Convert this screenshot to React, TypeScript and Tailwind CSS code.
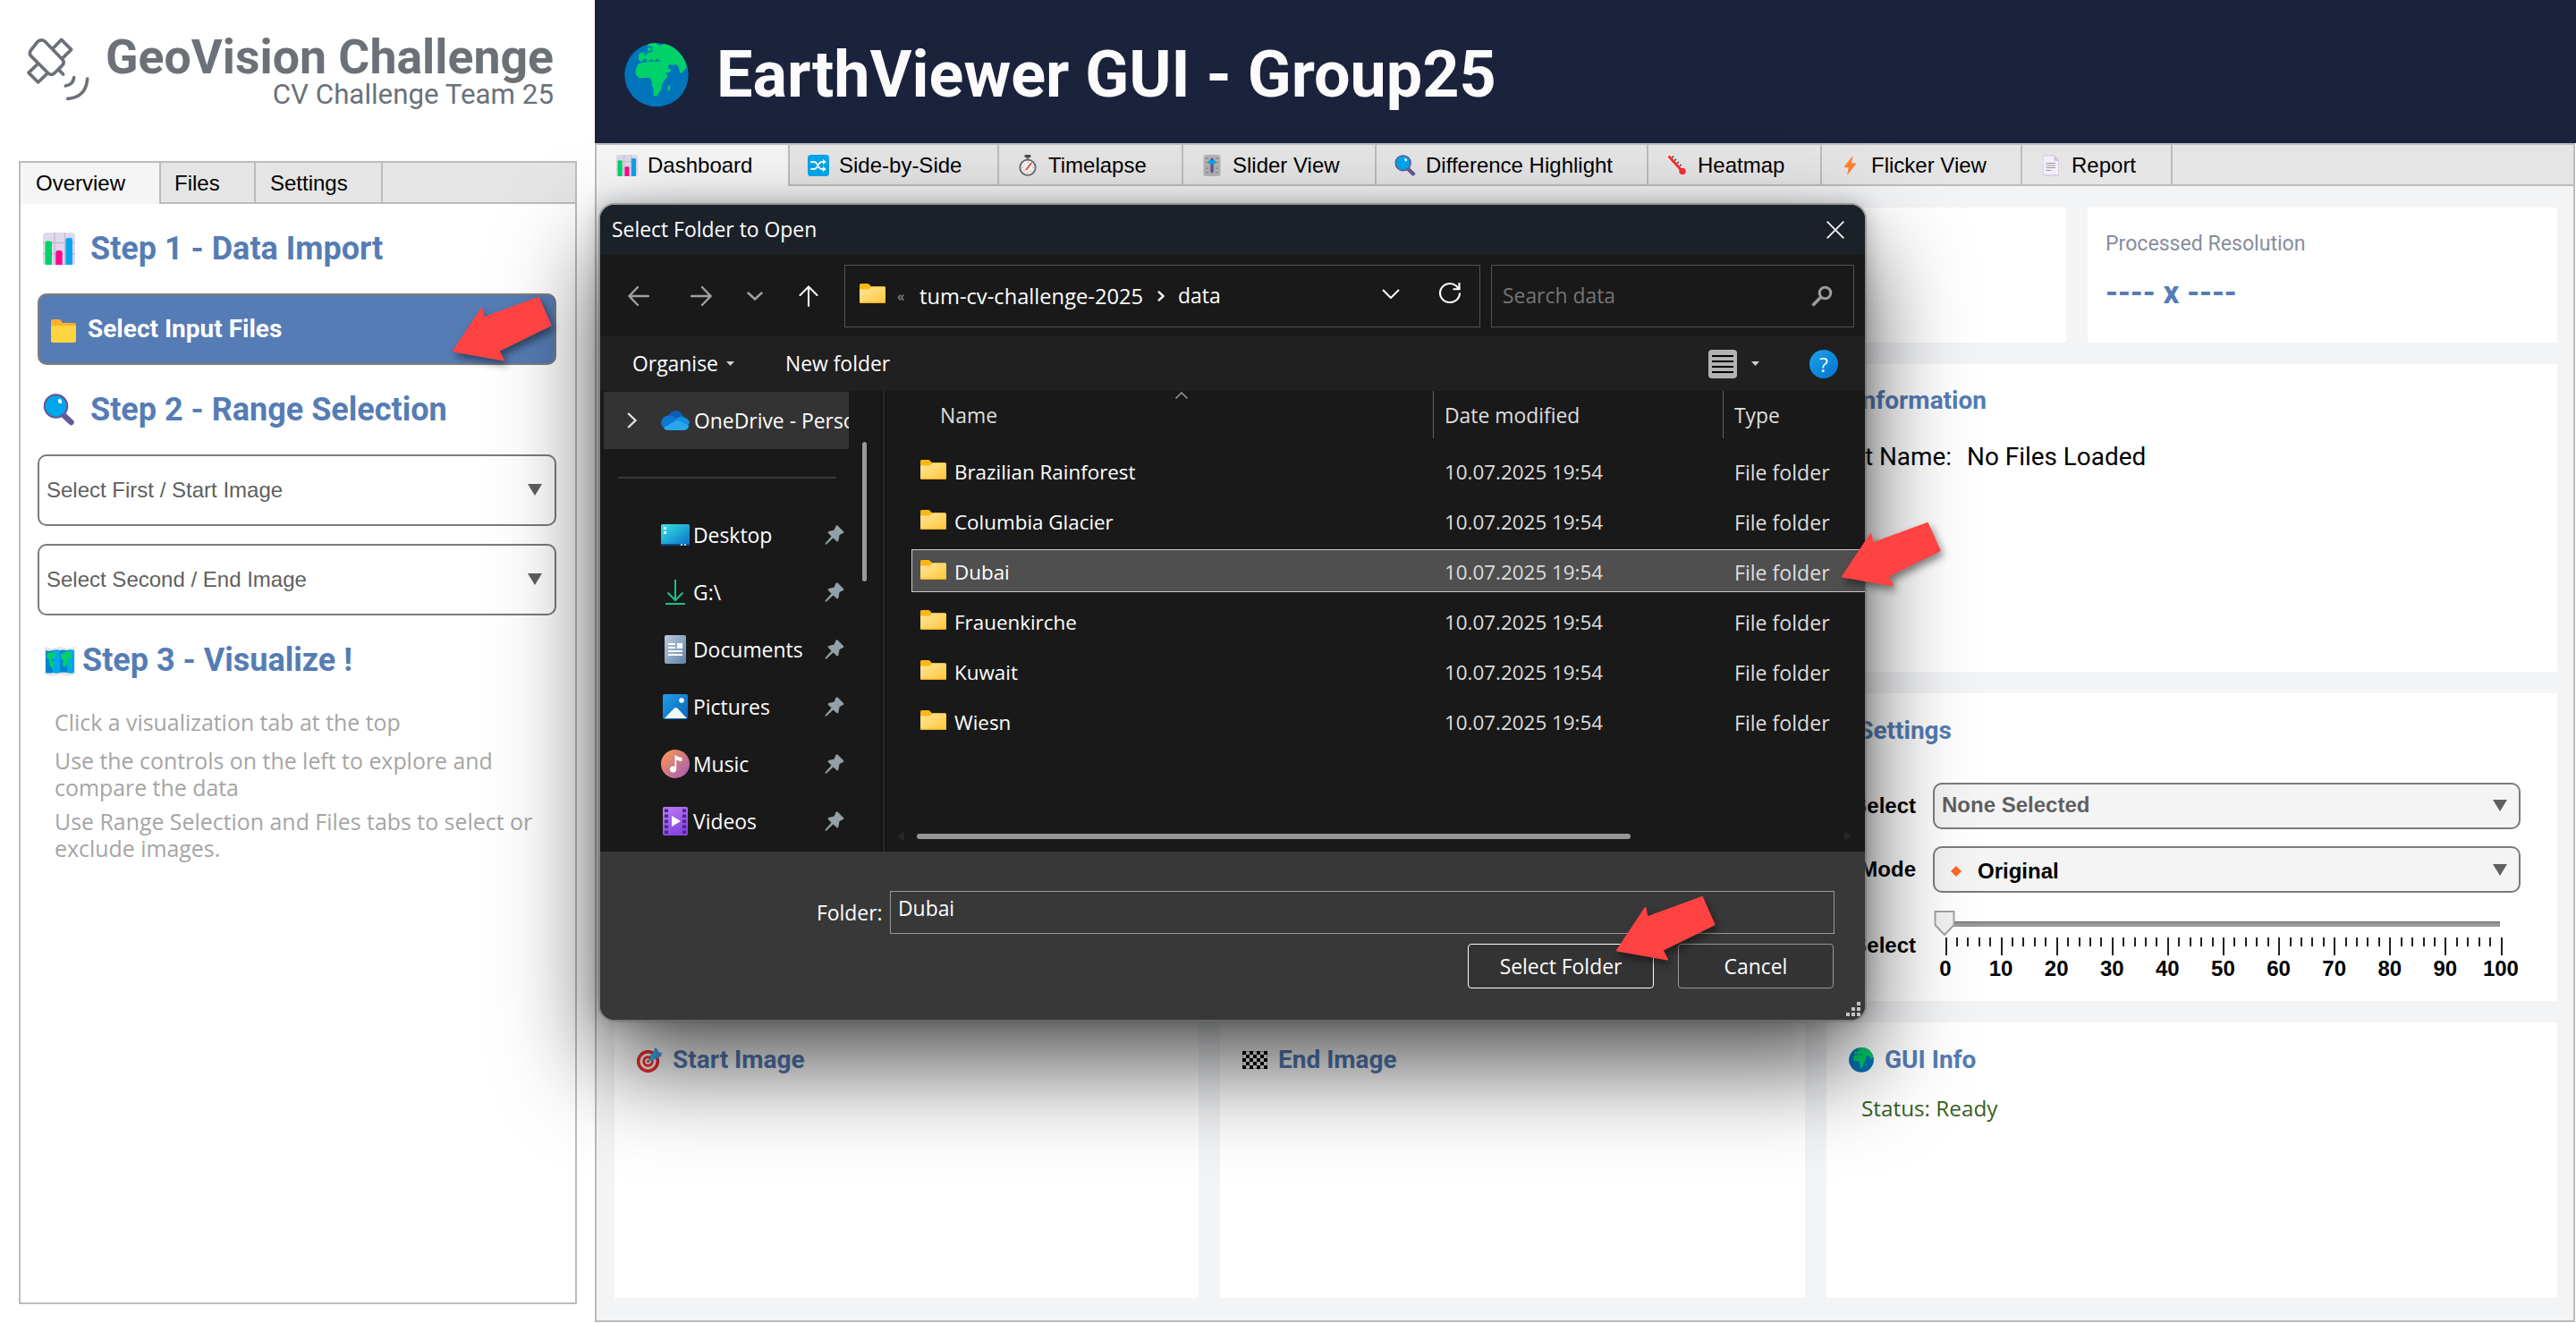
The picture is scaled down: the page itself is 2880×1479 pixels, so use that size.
import type { ReactNode } from 'react';

type IconProps = { className?: string };

const Chart = ({ className }: IconProps) => (
  <svg viewBox="0 0 36 36" className={className} preserveAspectRatio="none">
    <rect width="36" height="36" rx="3.5" fill="#e0d8ea" />
    <path d="M13 0v36M24.5 0v36M0 11.5h36M0 24h36" stroke="#c3b8d1" strokeWidth="1.3" />
    <path d="M2.5 36V11.5q0-2 2-2h3.500q2 0 2 2V36z" fill="#00d26a" />
    <path d="M14.300 36V22q0-2 2-2h3.400q2 0 2 2v14z" fill="#f70a8d" />
    <path d="M25.500 36V8q0-2 2-2h3.500q2 0 2 2v28z" fill="#00a6ed" />
  </svg>
);

const Globe = ({ className }: IconProps) => (
  <svg viewBox="24 22 216 216" className={className}>
    <circle cx="132" cy="129" r="107" fill="#0074ba" />
    <path
      fill="#00d26a"
      d="M104 26q14-4 26-4l6 6 12 2 8-6q40 8 60 40 14 20 18 38l-16 20q-6 4-8-4l-4-16-8-8-14 2-8-2-6 8 2 6q12 0 8 8-8 8-18 8-12-2-16-14l-4-4q6-8-2-12H120l-12-2-12-8H78l-6-6V64q2-10 12-10h12q6-4 8-8l-4-6z"
    />
    <path fill="#00d26a" d="M72 92q10-6 34-4l8 4 30 2 8 8 6 20 8 6q6 4 2 8-12 12-18 26l-2 16-14 20q-8 6-12-2v-22l-6-10v-14q-4-12-12-12l-20 2q-16 0-22-14-2-20 10-34z" />
    <path d="M84 80l12-6 6 10 14-8 8 8 10-10 12 10H84z" fill="#0074ba" />
    <path d="M102 40q2-8 14-4v14l-12 2-12 8 6 2" fill="none" stroke="#0074ba" strokeWidth="5" />
    <path d="M171 164q6-2 6 6 0 14-5 13-5-6-1-19z" fill="#00d26a" />
  </svg>
);

const Loupe = ({ className }: IconProps) => (
  <svg viewBox="0 0 36 36" className={className}>
    <path d="M23 24l8.500 8" stroke="#635994" strokeWidth="6.500" strokeLinecap="round" />
    <path d="M20 20l5 5.500" stroke="#635994" strokeWidth="3" />
    <circle cx="14.500" cy="14" r="12.700" fill="#00a6ed" stroke="#635994" strokeWidth="2.200" />
    <ellipse cx="19" cy="8.500" rx="2" ry="2.600" fill="#fff" transform="rotate(-20 19 8.500)" />
  </svg>
);

const EmojiFolder = ({ className }: IconProps) => (
  <svg viewBox="0 0 28 26" className={className}>
    <path d="M0 2q0-2 2-2h7q1.500 0 2.500 1.500L13 4h13q2 0 2 2v10H0z" fill="#ffb02e" />
    <path d="M0 24V9q0-2 2-2h24q2 0 2 2v15q0 2-2 2H2q-2 0-2-2z" fill="#fcd53f" />
  </svg>
);

const WorldMap = ({ className }: IconProps) => (
  <svg viewBox="0 0 34 34" className={className}>
    <path d="M0 1l8 2 9-2 9 2 8-2v31l-8 2-9-2-9 2-8-2z" fill="#e6e6e6" />
    <path d="M1 5q4 1.500 8 0v25q-4 1-8 0zM17 5q4-1 8 0v25q-4-1-8 0z" fill="#0084ce" />
    <path d="M9 5q4-1.500 8 0v25q-4 1.500-8 0zM25 5q4-1.500 8 0v25q-4 1.500-8 0z" fill="#00a6ed" />
    <path d="M3 8l6-1 4 3-3 4-3 1 4 5-2 6-3-4-1-6-3-4zM18 9l6-3 6 2v6l-3 1-2-1 1 4-3 6-3-3 1-4-3-3zM28 20l2 1v3l-3-1z" fill="#00d26a" />
  </svg>
);

const Shuffle = ({ className }: IconProps) => (
  <svg viewBox="0 0 24 24" className={className}>
    <rect width="24" height="24" rx="3.500" fill="#00a6ed" />
    <path d="M4 8h3.500q1.500 0 3 2.500l2 3.500q1.500 2 3 2H18M4 16h3.500q1.500 0 3-2.200M12.500 10.300q1.500-2.300 3-2.300H18" fill="none" stroke="#fff" strokeWidth="1.900" strokeLinecap="round" />
    <path d="M17 4.800L20.800 8 17 11.200zM17 12.800l3.800 3.200-3.800 3.200z" fill="#fff" />
  </svg>
);

const Stopwatch = ({ className }: IconProps) => (
  <svg viewBox="0 0 24 24" className={className}>
    <rect x="8.500" y="0" width="7" height="3" rx="1" fill="#4a4a4a" />
    <path d="M12 3v3" stroke="#777" strokeWidth="3" />
    <circle cx="12" cy="14.300" r="8.700" fill="#f4f4f4" stroke="#636363" strokeWidth="1.700" />
    <path d="M12 7.500v1.500M12 19.500V21M5.500 14.300H7M17 14.300h1.500M7.500 9.800l1 1M7.500 18.800l1-1M16.500 18.800l-1-1" stroke="#aaa" />
    <path d="M10.500 16.500L15.800 9.500" stroke="#f8312f" strokeWidth="1.600" strokeLinecap="round" />
  </svg>
);

const SliderIcon = ({ className }: IconProps) => (
  <svg viewBox="0 0 24 24" className={className}>
    <rect x="2.500" width="19" height="24" rx="2.500" fill="#b4b4b4" />
    <path d="M5 4h3M5 8.500h3M5 15h3M5 20h3M16 4h3M16 8.500h3M16 15h3M16 20h3" stroke="#7d7d7d" strokeWidth="1.200" />
    <rect x="10.300" y="3.500" width="3.400" height="17" rx="1.700" fill="#635994" />
    <rect x="8" y="6" width="8" height="4.500" rx="2" fill="#00a6ed" />
  </svg>
);

const Thermometer = ({ className }: IconProps) => (
  <svg viewBox="0 0 24 24" className={className}>
    <path d="M3.500 2.500L17.500 18" stroke="#f4f4f4" strokeWidth="5" strokeLinecap="round" />
    <circle cx="18" cy="18.500" r="4.800" fill="#f4f4f4" />
    <path d="M3.500 2.500L17 17.500" stroke="#f8312f" strokeWidth="3.200" strokeLinecap="round" />
    <circle cx="18" cy="18.500" r="3.800" fill="#f8312f" />
    <path d="M8 1.500l-1.500 1.800M11 4.800L9.500 6.500M13.800 7.800l-1.500 1.700M16.500 11L15 12.600" stroke="#222" strokeWidth="1.200" />
  </svg>
);

const Bolt = ({ className }: IconProps) => (
  <svg viewBox="0 0 24 24" className={className}>
    <path d="M14.500 1L4.800 13.200q-.4.800.5.900l4.500.3L8 23l10-12.500q.5-.9-.5-1L13 9.300z" fill="#ff822d" />
  </svg>
);

const Page = ({ className }: IconProps) => (
  <svg viewBox="0 0 24 24" className={className}>
    <path d="M3 1.500Q3 0 4.500 0H16l5 6v16.500q0 1.500-1.500 1.500h-15Q3 24 3 22.500z" fill="#d9d0e5" />
    <path d="M4 1.500h11.500V7H20v15H4z" fill="#f3eef8" />
    <path d="M15.500 1v5.500H20.500z" fill="#cdc4d6" />
    <path d="M6.500 9.500H17M6.500 12H17M6.500 14.500H17M6.500 17.500h6" stroke="#9b9b9b" strokeWidth="1" />
  </svg>
);

const Dart = ({ className }: IconProps) => (
  <svg viewBox="0 0 28 28" className={className}>
    <circle cx="12.500" cy="15.500" r="12.500" fill="#ca0b4a" />
    <circle cx="12.500" cy="15.500" r="12" fill="#f8312f" />
    <circle cx="12.500" cy="15.500" r="9" fill="#fff" />
    <circle cx="12.500" cy="15.500" r="6.300" fill="#f8312f" />
    <circle cx="12.500" cy="15.500" r="3.300" fill="#fff" />
    <circle cx="12.500" cy="15.500" r="1.500" fill="#f8312f" />
    <path d="M12.500 15.500l6-6" stroke="#1d8fa8" strokeWidth="1.600" />
    <path d="M15 9l4-4 1-5 3 2 1 3 4 1-1 4-5 2-5 3z" fill="#46a4fb" />
    <path d="M14.500 13.500l6-9 2 2-6 8z" fill="#26c9fc" />
  </svg>
);

const Checkered = ({ className }: IconProps) => (
  <svg viewBox="0 0 28 20" className={className}>
    {[0, 1, 2, 3, 4].map((r) =>
      [0, 1, 2, 3, 4, 5, 6].map((c) =>
        (r + c) % 2 === 0 ? <rect key={`${r}-${c}`} x={c * 4} y={r * 4} width="4" height="4" fill="#000" /> : null,
      ),
    )}
    <path d="M0 0h28v20H0z" fill="none" stroke="#000" strokeWidth=".6" />
  </svg>
);

const Satellite = ({ className }: IconProps) => (
  <svg viewBox="0 0 300 270" className={className} fill="none" stroke="#6c7178" strokeWidth="11" strokeLinecap="round" strokeLinejoin="round">
    <path d="M66 50q13-11 26 0l58 60q8 11-2 20l-26 26q-10 8-20 0L44 98q-8-9 0-20z" />
    <path d="M116 74l30-31 33 33-31 31" />
    <path d="M68 123l-32 31 32 32 32-31" />
    <path d="M138 145l14 14" />
    <path d="M188 170q-2 24-28 28M233 174q-4 62-66 67" />
  </svg>
);

const WinFolder = ({ className }: IconProps) => (
  <svg viewBox="0 0 29 22" className={className}>
    <defs>
      <linearGradient id="wf" x1="0" y1="0" x2="1" y2="1">
        <stop offset="0" stopColor="#ffe69b" />
        <stop offset="1" stopColor="#ffc73a" />
      </linearGradient>
    </defs>
    <path d="M0 1.500Q0 0 1.500 0H9q1 0 1.800.9L13 3.200h14.500Q29 3.200 29 4.700V12H0z" fill="#fdb714" />
    <path d="M0 6.500h9.500q1 0 1.700-.8l1.400-1.500q.7-.7 1.700-.7h13.200Q29 3.500 29 5v15.500q0 1.500-1.500 1.500h-26Q0 22 0 20.500z" fill="url(#wf)" />
    <path d="M.5 21.300h28" stroke="#e9a91f" />
  </svg>
);

const Cloud = ({ className }: IconProps) => (
  <svg viewBox="0 0 32 22" className={className}>
    <path d="M8 6q3-6 9-6 6 .5 8 7l-9 6z" fill="#0a5fb8" />
    <path d="M0 14Q1 6 8 5.500q6 0 9 4L6 20Q0 19 0 14z" fill="#0d78d4" />
    <path d="M17 9q5-4 10-1 5 2 5 6l-4 5-14-7z" fill="#1590df" />
    <path d="M3 19l13-7.500q2-1 4 0l11.300 5.500q-1 4.500-5.300 5H8q-4 0-5-3z" fill="#28a8ea" />
  </svg>
);

const Pin = ({ className }: IconProps) => (
  <svg viewBox="0 0 22 22" className={className}>
    <path d="M12.500 1q1-1.300 2.200-.3l6.200 6.200q1 1.200-.3 2.200l-4 2-1.300 6.400q-.7 1.700-2 .6L9.500 14.500 2 21.500l-1.500.3.300-1.600 6.700-7.700L4 9q-1-1.300.6-2l6-1.500z" fill="#93a0a8" />
  </svg>
);

const places: { label: string; icon: ReactNode }[] = [
  {
    label: 'Desktop',
    icon: (
      <svg viewBox="0 0 32 24" className="h-6 w-8">
        <defs>
          <linearGradient id="dk" x1="0" y1="0" x2="1" y2="1">
            <stop offset="0" stopColor="#35e3e3" />
            <stop offset="1" stopColor="#0a6fc9" />
          </linearGradient>
        </defs>
        <rect width="32" height="24" rx="1.500" fill="url(#dk)" />
        <rect y="22" width="32" height="2" fill="#0d4a86" />
        <path d="M3 3h3v3H3zM3 8h3v3H3z" fill="#fff" />
        <path d="M22 22h2v2h-2zM26 22h2v2h-2z" fill="#b9d9ee" />
      </svg>
    ),
  },
  {
    label: 'G:\\',
    icon: (
      <svg viewBox="0 0 24 28" className="h-7 w-6" fill="none" stroke="#22bd8c" strokeWidth="2">
        <path d="M12 0v23M3.500 14.500L12 23l8.500-8.500M1 27h22" />
      </svg>
    ),
  },
  {
    label: 'Documents',
    icon: (
      <svg viewBox="0 0 24 32" className="h-8 w-6">
        <defs>
          <linearGradient id="dc" x1="0" y1="0" x2="1" y2="1">
            <stop offset="0" stopColor="#bccbdc" />
            <stop offset="1" stopColor="#5f83a8" />
          </linearGradient>
        </defs>
        <rect width="24" height="32" rx="2" fill="url(#dc)" />
        <path d="M4 9h8v2H4zM4 13h8v2H4zM14 9h6v6h-6zM4 17h16v2H4zM4 21h16v2H4z" fill="#fff" />
      </svg>
    ),
  },
  {
    label: 'Pictures',
    icon: (
      <svg viewBox="0 0 28 28" className="size-7">
        <defs>
          <linearGradient id="pc" x1="0" y1="0" x2="1" y2="1">
            <stop offset="0" stopColor="#1f9fe8" />
            <stop offset="1" stopColor="#0a62ba" />
          </linearGradient>
        </defs>
        <rect width="28" height="28" rx="2" fill="url(#pc)" />
        <circle cx="21" cy="7" r="2.800" fill="#fff" />
        <path d="M2 27l11-11.500q1.500-1.200 3 0L27 27z" fill="#f1f7fd" />
      </svg>
    ),
  },
  {
    label: 'Music',
    icon: (
      <svg viewBox="0 0 32 32" className="size-8">
        <defs>
          <linearGradient id="ms" x1="0" y1="0" x2="1" y2="1">
            <stop offset=".15" stopColor="#f3905c" />
            <stop offset=".9" stopColor="#a960b0" />
          </linearGradient>
        </defs>
        <circle cx="16" cy="16" r="16" fill="url(#ms)" />
        <circle cx="13.500" cy="22" r="3.500" fill="#fff" />
        <path d="M15.500 22V6q5 3 8 3v4q-4 0-6.300-1.800V22z" fill="#fff" />
      </svg>
    ),
  },
  {
    label: 'Videos',
    icon: (
      <svg viewBox="0 0 28 32" className="h-8 w-7">
        <defs>
          <linearGradient id="vd" x1="0" y1="0" x2=".4" y2="1">
            <stop offset="0" stopColor="#bb7df6" />
            <stop offset="1" stopColor="#8a45e6" />
          </linearGradient>
        </defs>
        <rect width="28" height="32" rx="2" fill="url(#vd)" />
        <path d="M2 2.500h4v3.500H2zM2 8.500h4V12H2zM2 14.500h4V18H2zM2 20.500h4V24H2zM2 26.500h4V30H2zM22 2.500h4v3.500h-4zM22 8.500h4V12h-4zM22 14.500h4V18h-4zM22 20.500h4V24h-4zM22 26.500h4V30h-4z" fill="#492882" />
        <path d="M10 10l10 6-10 6z" fill="#fff" />
      </svg>
    ),
  },
];

const folders = ['Brazilian Rainforest', 'Columbia Glacier', 'Dubai', 'Frauenkirche', 'Kuwait', 'Wiesn'];

const mainTabs: { label: string; width: string; Icon: (p: IconProps) => ReactNode }[] = [
  { label: 'Dashboard', width: 'w-[216px]', Icon: Chart },
  { label: 'Side-by-Side', width: 'w-[234px]', Icon: Shuffle },
  { label: 'Timelapse', width: 'w-[206px]', Icon: Stopwatch },
  { label: 'Slider View', width: 'w-[216px]', Icon: SliderIcon },
  { label: 'Difference Highlight', width: 'w-[304px]', Icon: Loupe },
  { label: 'Heatmap', width: 'w-[194px]', Icon: Thermometer },
  { label: 'Flicker View', width: 'w-[224px]', Icon: Bolt },
  { label: 'Report', width: 'w-[168px]', Icon: Page },
];

const Triangle = () => (
  <svg viewBox="0 0 16 13" className="h-[13px] w-4 shrink-0">
    <path d="M0 0h16L8 13z" fill="#606060" />
  </svg>
);

const Caret = ({ className }: IconProps) => (
  <svg viewBox="0 0 9 5" className={`h-[5px] w-[9px] ${className}`}>
    <path d="M0 0h9L4.500 5z" fill="#d0d0d0" />
  </svg>
);

function StepTitle({ icon, gap, children }: { icon: ReactNode; gap: string; children: string }) {
  return (
    <h2 className={`flex h-11 items-center pl-[25px] font-['Roboto',sans-serif] text-[36px] leading-[44px] font-bold whitespace-nowrap text-[#557cb4] ${gap}`}>
      {icon}
      {children}
    </h2>
  );
}

function RangeSelect({ label, className }: { label: string; className: string }) {
  return (
    <div className={`ml-[19px] flex h-20 w-[580px] items-center justify-between rounded-[10px] border-2 border-[#7b7b7b] pr-[14px] pb-px pl-2 text-2xl leading-8 text-[#606060] ${className}`}>
      <span>{label}</span>
      <Triangle />
    </div>
  );
}

function Sidebar() {
  return (
    <aside className="h-[1479px] w-[665px] shrink-0 bg-white">
      <div className="flex h-[180px] font-['Roboto',sans-serif] text-[#6c7178]">
        <Satellite className="mt-[30px] ml-5 h-[90px] w-[100px] shrink-0" />
        <div className="mt-9 flex w-[499px] flex-col items-end whitespace-nowrap">
          <h1 className="text-[53.6px] leading-[56px] font-bold">GeoVision Challenge</h1>
          <p className="text-[31.3px] leading-7">CV Challenge Team 25</p>
        </div>
      </div>
      <div className="ml-[21px] h-[1278px] w-[624px] border-2 border-[#bcbcbc]">
        <div className="flex h-[46px] text-2xl leading-[46px]">
          <div className="w-[157px] border-r-2 border-[#bcbcbc] bg-[#f5f5f5] pl-[17px]">Overview</div>
          <div className="w-[106px] border-r-2 border-b-2 border-[#bcbcbc] bg-[#e5e5e5] pl-[15px]">Files</div>
          <div className="w-[142px] border-r-2 border-b-2 border-[#bcbcbc] bg-[#e5e5e5] pl-4">Settings</div>
          <div className="grow border-b-2 border-[#bcbcbc] bg-[#e5e5e5]" />
        </div>
        <div className="pt-7">
          <StepTitle gap="gap-[17px]" icon={<Chart className="size-9" />}>Step 1 - Data Import</StepTitle>
          <button className="mt-7 ml-[19px] flex h-20 w-[580px] items-center gap-[13px] rounded-[10px] border-2 border-[#7d7d7d] bg-[#557cb4] pl-[13px] font-['Roboto',sans-serif] text-[28px] leading-8 font-bold text-white">
            <EmojiFolder className="mt-1 h-[26px] w-7" />
            Select Input Files
          </button>
          <div className="mt-[28px]">
            <StepTitle gap="gap-[17px]" icon={<Loupe className="size-9" />}>Step 2 - Range Selection</StepTitle>
          </div>
          <RangeSelect label="Select First / Start Image" className="mt-7" />
          <RangeSelect label="Select Second / End Image" className="mt-5" />
          <div className="mt-7 pl-[2px]">
            <StepTitle gap="gap-[8px]" icon={<WorldMap className="mt-0.5 size-[34px]" />}>Step 3 - Visualize !</StepTitle>
          </div>
          <div className="mt-[32px] pl-[38px] font-['Open_Sans',sans-serif] text-[24.900px] leading-[30px] whitespace-nowrap text-[#a5a5a5]">
            <p>Click a visualization tab at the top</p>
            <p className="mt-[13px]">Use the controls on the left to explore and<br />compare the data</p>
            <p className="mt-2">Use Range Selection and Files tabs to select or<br />exclude images.</p>
          </div>
        </div>
      </div>
    </aside>
  );
}

function CardTitle({ icon, gap, children }: { icon?: ReactNode; gap?: string; children: string }) {
  return (
    <h3 className={`flex h-9 items-center font-['Roboto',sans-serif] text-[28px] leading-9 font-bold whitespace-nowrap text-[#557cb4] ${gap ?? ''}`}>
      {icon}
      {children}
    </h3>
  );
}

function ScaleSlider() {
  const marks = Array.from({ length: 51 }, (_, i) => i);
  return (
    <div className="ml-[2px] w-[683px]">
      <svg viewBox="0 0 683 56" className="h-14 w-[683px]">
        <rect x="31" y="16" width="620" height="6" fill="#999" />
        <rect x="31" y="16" width="620" height="1.500" fill="#777" />
        {marks.map((i) => (
          <rect key={i} x={Math.round(30.500 + i * 12.420)} y="34" width="2" height={i % 5 === 0 ? 20 : 10} fill="#222" />
        ))}
        <path d="M19.500 5h21v15L30 31 19.500 20z" fill="#f3f3f3" stroke="#a3a3a3" strokeWidth="2" />
      </svg>
      <div className="-mt-px flex justify-between text-2xl leading-7 font-bold">
        {[0, 10, 20, 30, 40, 50, 60, 70, 80, 90, 100].map((n) => (
          <span key={n} className="w-[62px] text-center">{n}</span>
        ))}
      </div>
    </div>
  );
}

function Main() {
  return (
    <main className="w-[2215px] shrink-0">
      <header className="flex h-40 items-center bg-[#1b233c] pt-[7px] pl-[33px]">
        <Globe className="size-[72px]" />
        <h1 className="ml-[31px] font-['Roboto',sans-serif] text-[71.900px] leading-[90px] font-bold text-[#fbfbfb]">EarthViewer GUI - Group25</h1>
      </header>
      <div className="h-[1318px] w-[2214px] border-2 border-[#bcbcbc] bg-[#f3f4f6]">
        <nav className="flex h-[46px] text-2xl leading-[46px]">
          {mainTabs.map(({ label, width, Icon }, i) => (
            <div
              key={label}
              className={`${width} flex items-center gap-[11px] border-r-2 border-[#bcbcbc] whitespace-nowrap ${i === 0 ? 'bg-[#f5f5f5] pl-[22px]' : 'border-b-2 bg-[#e5e5e5] pt-[2px] pl-5'}`}
            >
              <Icon className="size-6 shrink-0" />
              {label}
            </div>
          ))}
          <div className="grow border-b-2 border-[#bcbcbc] bg-[#e5e5e5]" />
        </nav>
        <div className="flex flex-col gap-6 px-5 pt-6 pr-[19px]">
          <div className="grid h-[151px] w-[2172px] grid-cols-4 gap-6 *:bg-white">
            <div />
            <div />
            <div />
            <div className="pt-[27px] pl-5 font-['Roboto',sans-serif]">
              <p className="text-[23.100px] leading-7 text-[#868e9e]">Processed Resolution</p>
              <p className="mt-5 text-[35.300px] leading-10 font-bold text-[#557cb4]">---- x ----</p>
            </div>
          </div>
          <div className="grid w-[2172px] grid-cols-[1331px_817px] gap-6 *:bg-white">
            <div className="h-[344px]" />
            <div className="h-[344px] pt-[23px]">
              <div className="flex w-[179px] justify-end"><CardTitle>Information</CardTitle></div>
              <div className="mt-[27px] flex font-['Roboto',sans-serif] text-[27.900px] leading-9 whitespace-nowrap">
                <span className="w-[140px] text-right">Set Name:</span>
                <span className="ml-[17px]">No Files Loaded</span>
              </div>
            </div>
          </div>
          <div className="grid w-[2172px] grid-cols-[1331px_817px] gap-6 *:bg-white">
            <div className="h-[344px]" />
            <div className="h-[344px] pt-[24px] text-2xl font-bold">
              <div className="flex w-[140px] justify-end"><CardTitle>Settings</CardTitle></div>
              <div className="mt-[40px] flex h-[52px] items-center">
                <span className="w-[100px] text-right leading-8">Select</span>
                <div className="ml-[19px] flex h-[52px] w-[657px] items-center justify-between rounded-[10px] border-2 border-[#7b7b7b] bg-[#f4f4f4] pr-[13px] pb-[2px] pl-2 leading-8 text-[#606060]">
                  None Selected
                  <Triangle />
                </div>
              </div>
              <div className="mt-[19px] flex h-[52px] items-center">
                <span className="w-[100px] text-right leading-8">Mode</span>
                <div className="ml-[19px] flex h-[52px] w-[657px] items-center rounded-[10px] border-2 border-[#7b7b7b] bg-[#f4f4f4] pr-[13px] pl-[18px] leading-8">
                  <svg viewBox="0 0 12 12" className="mt-1 size-3"><path d="M6 0l6 6-6 6-6-6z" fill="#ff6723" /></svg>
                  <span className="mt-[3px] ml-[18px] grow">Original</span>
                  <Triangle />
                </div>
              </div>
              <div className="mt-4 flex">
                <span className="mt-[27px] w-[100px] text-right leading-8">Select</span>
                <ScaleSlider />
              </div>
            </div>
          </div>
          <div className="grid h-[308px] w-[2172px] grid-cols-[653px_654px_817px] gap-6 *:bg-white *:pt-[24px] *:pl-[25px]">
            <div><CardTitle gap="gap-3" icon={<Dart className="size-7" />}>Start Image</CardTitle></div>
            <div><CardTitle gap="gap-3" icon={<Checkered className="h-5 w-7" />}>End Image</CardTitle></div>
            <div>
              <CardTitle gap="gap-3" icon={<Globe className="size-7" />}>GUI Info</CardTitle>
              <p className="mt-5 pl-[14px] font-['Open_Sans',sans-serif] text-[24.300px] leading-8 text-[#375f1f]">Status: Ready</p>
            </div>
          </div>
        </div>
      </div>
    </main>
  );
}

function Dialog() {
  return (
    <section className="absolute top-[229px] left-[671px] h-[911px] w-[1414px] overflow-hidden rounded-2xl bg-[#191919] font-['Open_Sans',sans-serif] text-[22.900px] leading-8 whitespace-nowrap text-white shadow-[0_0_0_2px_rgba(110,110,110,0.5),0_0_24px_rgba(0,0,0,0.25),0_50px_110px_rgba(0,0,0,0.68)]">
      <div className="flex h-14 items-center justify-between bg-[#1c2129] pr-[23px] pl-[13px]">
        <span>Select Folder to Open</span>
        <svg viewBox="0 0 20 20" className="-mt-px size-5" stroke="#f2f2f2" strokeWidth="1.800"><path d="M.7.7l18.600 18.600M19.300.7L.7 19.300" /></svg>
      </div>
      <div className="flex h-[91px] items-center pl-[31px]">
        <svg viewBox="0 0 24 22" className="h-[22px] w-6" fill="none" stroke="#a0a0a0" strokeWidth="2.400" strokeLinecap="round"><path d="M23 11H1.500M11 1L1.500 11 11 21" /></svg>
        <svg viewBox="0 0 24 22" className="ml-[46px] h-[22px] w-6" fill="none" stroke="#a0a0a0" strokeWidth="2.400" strokeLinecap="round"><path d="M1 11h21.500M13 1l9.500 10L13 21" /></svg>
        <svg viewBox="0 0 18 10" className="ml-[39px] h-[10px] w-[18px]" fill="none" stroke="#a0a0a0" strokeWidth="2.500" strokeLinecap="round"><path d="M1.500 1.500L9 8.500l7.500-7" /></svg>
        <svg viewBox="0 0 22 24" className="ml-10 h-6 w-[22px]" fill="none" stroke="#f5f5f5" strokeWidth="2.100" strokeLinecap="round"><path d="M11 23V1.500M1.500 11L11 1.500 20.500 11" /></svg>
        <div className="ml-[29px] flex h-[70px] w-[711px] items-center border border-[#535353] pr-[21px] pl-4">
          <WinFolder className="-mt-[5px] h-[22px] w-[29px]" />
          <span className="ml-[13px] w-[22px] text-[17px] leading-8 text-[#9a9a9a]">«</span>
          <span className="ml-[3px] text-[23.700px]">tum-cv-challenge-2025</span>
          <svg viewBox="0 0 8 12" className="ml-4 h-3 w-2" fill="none" stroke="#fff" strokeWidth="2.400"><path d="M1 .8L6.500 6 1 11.200" /></svg>
          <span className="ml-[15px] grow">data</span>
          <svg viewBox="0 0 20 11" className="-mt-[5px] h-[11px] w-5" fill="none" stroke="#fff" strokeWidth="2"><path d="M1 1l9 9 9-9" /></svg>
          <svg viewBox="0 0 24 23" className="-mt-[6px] ml-11 h-[23px] w-6" fill="none" stroke="#fff" strokeWidth="2.100"><path d="M23 11.500A11 10.500 0 1 1 19 3.500l3 3.300M22.500 0v7.200h-7" /></svg>
        </div>
        <div className="ml-3 flex h-[70px] w-[406px] items-center justify-between border border-[#535353] pr-[23px] pl-3 text-[#757575]">
          <span>Search data</span>
          <svg viewBox="0 0 24 24" className="size-6" fill="none" stroke="#9c9c9c"><circle cx="15.500" cy="8.500" r="6.300" strokeWidth="3" /><path d="M11 13L1.500 22.500" strokeWidth="3.500" /></svg>
        </div>
      </div>
      <div className="flex h-[61px] items-center bg-[#202020] pl-[36px]">
        <span>Organise</span>
        <Caret className="ml-[9px]" />
        <span className="ml-[57px] grow">New folder</span>
        <svg viewBox="0 0 32 32" className="size-8"><rect width="32" height="32" rx="4" fill="#b2b2b2" /><path d="M4 7h24M4 13h24M4 19h24M4 25h24" stroke="#000" strokeWidth="2" /></svg>
        <Caret className="ml-4" />
        <span className="mr-[30px] ml-14 flex size-8 items-center justify-center rounded-full bg-linear-to-br from-[#1ea3e6] to-[#0570d2] text-[22px]">?</span>
      </div>
      <div className="flex h-[515px]">
        <div className="relative w-[314px] shrink-0 overflow-hidden bg-[#191919]">
          <div className="mt-px ml-1 flex h-16 w-[274px] items-center overflow-hidden bg-[#333]">
            <svg viewBox="0 0 11 18" className="ml-[26px] h-[18px] w-[11px] shrink-0" fill="none" stroke="#e0e0e0" strokeWidth="2.400"><path d="M1.200 1L9.500 9l-8.300 8" /></svg>
            <Cloud className="ml-[27px] h-[22px] w-8 shrink-0" />
            <span className="mt-[2px] ml-[5px]">OneDrive - Personal</span>
          </div>
          <div className="mt-[31px] ml-5 h-[2px] w-[244px] bg-[#3a3a3a]" />
          <div className="mt-[31px]">
            {places.map(({ label, icon }) => (
              <div key={label} className="flex h-16 items-center pl-[68px]">
                <span className="flex w-8 justify-center">{icon}</span>
                <span className="ml-1 w-[147px] pt-px">{label}</span>
                <Pin className="size-[22px]" />
              </div>
            ))}
          </div>
          <div className="absolute top-[57px] left-[293px] h-[156px] w-[5px] rounded-full bg-[#999]" />
        </div>
        <div className="w-[6px] shrink-0 border-x-2 border-[#151515] bg-[#2b2b2b]" />
        <div className="relative grow">
          <div className="flex h-[53px] text-[#dedede]">
            <div className="w-[611px] pt-3 pl-[60px]">Name</div>
            <div className="w-[324px] border-l border-[#636363] pt-3 pl-3">Date modified</div>
            <div className="border-l border-[#636363] pt-3 pl-3">Type</div>
          </div>
          <svg viewBox="0 0 14 8" className="absolute top-px left-[323px] h-2 w-[14px]" fill="none" stroke="#a8a8a8" strokeWidth="1.300"><path d="M.5 7.500L7 1l6.500 6.500" /></svg>
          <div className="mt-3 ml-7 flex flex-col gap-2 text-[22.400px]">
            {folders.map((name) => (
              <div
                key={name}
                className={`grid h-12 grid-cols-[586px_324px_1fr] items-center border border-r-0 pl-[9px] ${name === 'Dubai' ? 'border-[#c9c9c9] bg-[#4f4f4f]' : 'border-transparent'}`}
              >
                <span className="flex items-center">
                  <WinFolder className="-mt-[3px] h-[22px] w-[29px]" />
                  <span className="ml-[9px] pt-1">{name}</span>
                </span>
                <span className="pt-1 text-[#dedede]">10.07.2025 19:54</span>
                <span className="pt-1 text-[23.100px] text-[#dedede]">File folder</span>
              </div>
            ))}
          </div>
          <div className="absolute top-[495px] left-[34px] h-[6px] w-[798px] rounded-full bg-[#959595]" />
          <svg viewBox="0 0 8 12" className="absolute top-[492px] left-3 h-3 w-2"><path d="M8 0v12L0 6z" fill="#262626" /></svg>
          <svg viewBox="0 0 8 12" className="absolute top-[492px] left-[1071px] h-3 w-2"><path d="M0 0v12l8-6z" fill="#262626" /></svg>
        </div>
      </div>
      <div className="relative h-[188px] bg-[#383838] pt-11">
        <div className="flex items-center pl-[242px]">
          <span className="w-[73px] pt-px">Folder:</span>
          <div className="ml-[9px] h-12 w-[1056px] border border-[#999] pt-[3px] pl-2">Dubai</div>
        </div>
        <div className="mt-[11px] flex h-[50px] justify-end gap-[27px] pr-[35px]">
          <button className="w-[208px] rounded-[4px] border border-white bg-[#333] pt-px">Select Folder</button>
          <button className="w-[174px] rounded-[4px] border border-[#999] bg-[#333] pt-px">Cancel</button>
        </div>
        <svg viewBox="0 0 16 16" className="absolute right-[5px] bottom-1 size-4">
          <path d="M12 0h4v4h-4zM6 6h4v4H6zM12 6h4v4h-4zM0 12h4v4H0zM6 12h4v4H6zM12 12h4v4h-4z" fill="#c4c4c4" />
        </svg>
      </div>
    </section>
  );
}

const Arrow = ({ className }: IconProps) => (
  <svg viewBox="500 325 130 90" className={`absolute h-[90px] w-[130px] drop-shadow-[3px_5px_4px_rgba(0,0,0,0.45)] ${className}`}>
    <path d="M507 392.500L538.500 345l2 10.500L602 333l13.500 30.500-58 28.500 5.500 10.500z" fill="#ff4343" stroke="#ff4343" strokeWidth="2" strokeLinejoin="round" />
  </svg>
);

export default function App() {
  return (
    <div className="relative flex h-[1479px] w-[2880px] overflow-hidden bg-white font-['Liberation_Sans',Arial,sans-serif] text-black">
      <Sidebar />
      <Main />
      <Dialog />
      <Arrow className="top-[325px] left-[500px]" />
      <Arrow className="top-[577px] left-[2053px]" />
      <Arrow className="top-[995px] left-[1801px]" />
    </div>
  );
}
